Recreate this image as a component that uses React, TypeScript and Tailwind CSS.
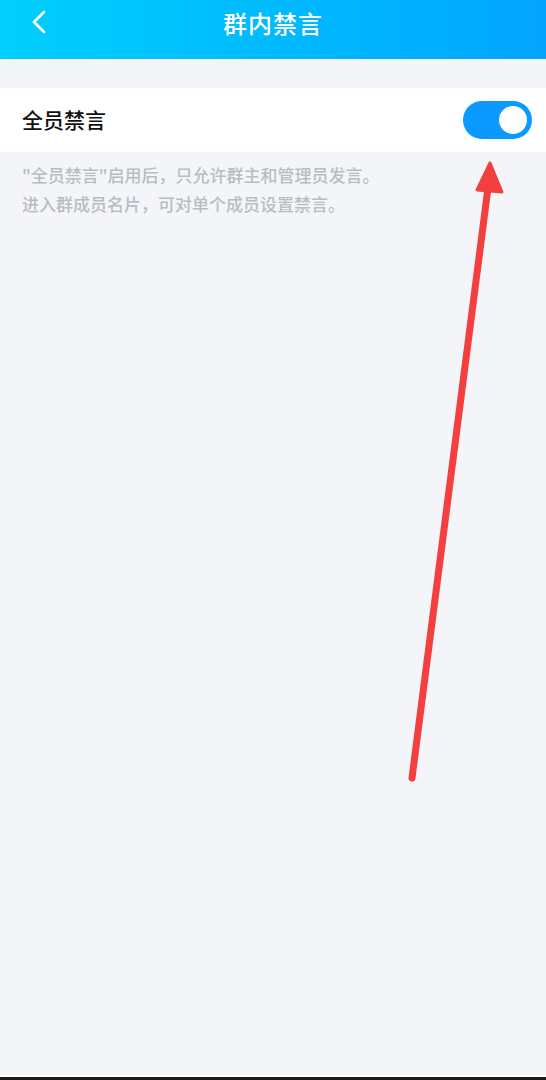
import React, { useState } from "react";

// Group mute settings screen with an annotation arrow pointing at the switch.

function BackIcon() {
  return (
    <svg width="18" height="26" viewBox="0 0 18 26" fill="none">
      <path d="M14 3 L4 13 L14 23" stroke="white" strokeWidth="2.6" strokeLinecap="round" strokeLinejoin="round" />
    </svg>
  );
}

function Toggle({ on, onChange }: { on: boolean; onChange: () => void }) {
  return (
    <button
      onClick={onChange}
      className={`flex h-[38px] w-[69px] items-center rounded-full px-[5px] ${on ? "justify-end bg-[#0a99ff]" : "justify-start bg-[#e3e5ea]"}`}
    >
      <span className="h-[28px] w-[28px] rounded-full bg-white" />
    </button>
  );
}

export default function App() {
  const [muted, setMuted] = useState(true);

  return (
    <div
      className="relative flex h-[1080px] w-[546px] flex-col bg-[#f4f5f9]"
      style={{ fontFamily: '"Noto Sans CJK SC", "Noto Sans", sans-serif' }}
    >
      <header className="relative flex h-[59px] shrink-0 items-center justify-center bg-gradient-to-r from-[#02cffc] to-[#03a5ff]">
        <div className="absolute left-[30px] top-[9px]">
          <BackIcon />
        </div>
        <h1 className="mt-[-14px] text-[24px] font-medium tracking-[1px] text-white">群内禁言</h1>
      </header>

      <div className="mt-[29px] flex h-[64px] items-center justify-between bg-white pl-[22px] pr-[14px]">
        <span className="text-[21px] font-medium text-[#111]">全员禁言</span>
        <Toggle on={muted} onChange={() => setMuted(!muted)} />
      </div>

      <div className="px-[22px] pt-[8px] text-[17px] font-medium leading-[29px] text-[#b9bcc4]">
        <p>"全员禁言"启用后，只允许群主和管理员发言。</p>
        <p>进入群成员名片，可对单个成员设置禁言。</p>
      </div>

      <div className="flex-1" />
      <div className="h-[2px] bg-white" />
      <div className="h-[3px] bg-[#1a1a1a]" />

      {/* annotation arrow */}
      <svg className="pointer-events-none absolute left-0 top-0" width="546" height="1080">
        <line x1="412" y1="778" x2="489" y2="180" stroke="#f43f3f" strokeWidth="7" strokeLinecap="round" />
        <polygon points="490,163 477,190 502,192" fill="#f43f3f" stroke="#f43f3f" strokeWidth="3" strokeLinejoin="round" />
      </svg>
    </div>
  );
}
